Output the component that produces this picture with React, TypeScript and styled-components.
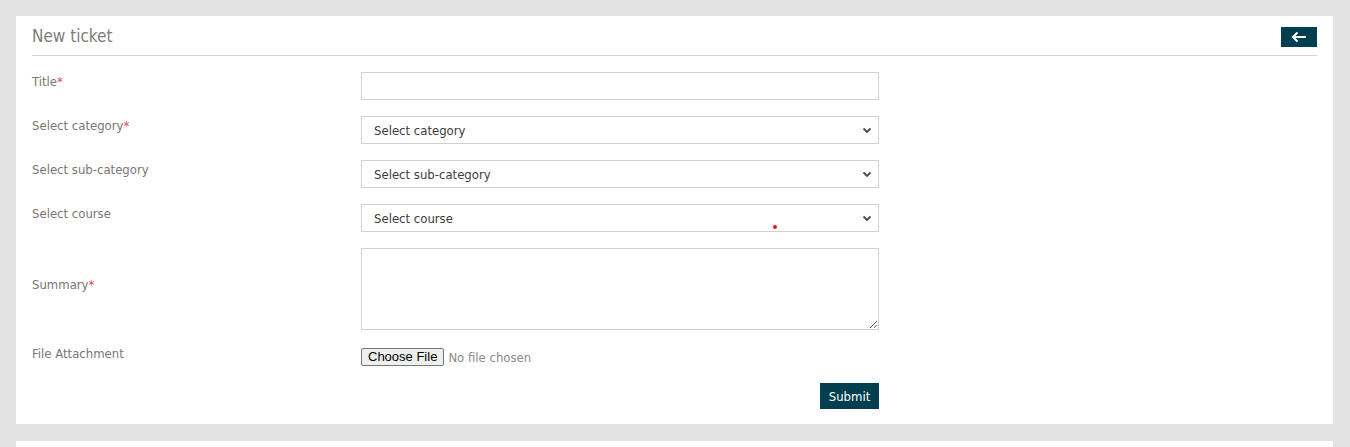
import React from 'react';
import styled, { createGlobalStyle } from 'styled-components';

const GlobalStyle = createGlobalStyle`
  html, body {
    margin: 0;
    padding: 0;
    background: #e3e3e3;
  }
  body {
    font-family: 'DejaVu Sans Condensed', 'DejaVu Sans', Tahoma, sans-serif;
    font-size: 13px;
  }
  * {
    box-sizing: border-box;
  }
`;

const Page = styled.div`
  padding: 16px 17px 0 16px;
  display: flex;
  flex-direction: column;
  gap: 17px;
`;

const Card = styled.section`
  background: #fff;
  padding: 11px 16px 15px 16px;
  position: relative;
`;

const EmptyCard = styled.section`
  background: #fff;
  height: 20px;
`;

const Header = styled.div`
  display: flex;
  align-items: flex-start;
  justify-content: space-between;
  border-bottom: 1px solid #d6d6d6;
  height: 29px;
`;

const Heading = styled.h2`
  margin: -1px 0 0;
  font-size: 17px;
  font-weight: normal;
  color: #7d7d7d;
  line-height: 20px;
`;

const BackButton = styled.button`
  width: 36px;
  height: 20px;
  border: none;
  background: #003e50;
  display: flex;
  align-items: center;
  justify-content: center;
  padding: 0;
  cursor: pointer;
`;

const Form = styled.form`
  display: flex;
  flex-direction: column;
  gap: 16px;
  padding-top: 16px;
`;

const Row = styled.div`
  display: grid;
  grid-template-columns: 329px 518px;
  align-items: center;
`;

const Label = styled.label<{ $tight?: boolean }>`
  color: #7b7474;
  font-size: 13px;
  line-height: 16px;
  margin-bottom: ${(p) => (p.$tight ? '5px' : '8px')};
`;

const Star = styled.span`
  color: #e2454f;
`;

const TextInput = styled.input`
  height: 28px;
  width: 100%;
  border: 1px solid #ccd0d5;
  padding: 0 12px;
  font: inherit;
  outline: none;
`;

const SelectWrap = styled.div`
  position: relative;
`;

const Select = styled.select`
  appearance: none;
  -webkit-appearance: none;
  height: 28px;
  width: 100%;
  border: 1px solid #ccd0d5;
  background: #fff;
  padding: 0 12px;
  font: inherit;
  font-size: 13px;
  color: #3c3c3c;
  outline: none;
`;

const Chevron = styled.svg`
  position: absolute;
  right: 7px;
  top: 11px;
  pointer-events: none;
`;

const TextArea = styled.textarea`
  height: 82px;
  width: 100%;
  border: 1px solid #ccd0d5;
  padding: 6px 12px;
  font: inherit;
  resize: vertical;
  outline: none;
  display: block;
`;

const FileInput = styled.input`
  display: block;
  font-family: 'DejaVu Sans Condensed', 'DejaVu Sans', Tahoma, sans-serif;
  font-size: 13px;
  line-height: 18px;
  color: #8a8a8a;
  height: 18px;

  &::file-selector-button {
    font-family: 'Liberation Sans', Arial, sans-serif;
    font-size: 13px;
    color: #000;
    background: #efefef;
    border: 1px solid #767676;
    border-radius: 2px;
    padding: 0 6px;
    height: 18px;
    margin-right: 4px;
  }
`;

const SubmitRow = styled.div`
  display: grid;
  grid-template-columns: 329px 518px;
`;

const SubmitButton = styled.button`
  grid-column: 2;
  justify-self: end;
  height: 26px;
  width: 59px;
  border: none;
  background: #003e50;
  color: #fff;
  font-family: 'DejaVu Sans Condensed', 'DejaVu Sans', Tahoma, sans-serif;
  font-size: 13px;
  padding: 0;
  cursor: pointer;
`;

const Dot = styled.span`
  position: absolute;
  left: 757px;
  top: 209px;
  width: 4px;
  height: 4px;
  border-radius: 50%;
  background: #e8141e;
`;

const ChevronIcon = () => (
  <Chevron width="10" height="7" viewBox="0 0 10 7">
    <path d="M1.5 1.5 L5 5 L8.5 1.5" fill="none" stroke="#4a4a4a" strokeWidth="1.8" />
  </Chevron>
);

const selects = [
  { label: 'Select category', required: true },
  { label: 'Select sub-category', required: false },
  { label: 'Select course', required: false },
];

export default function App() {
  return (
    <>
      <GlobalStyle />
      <Page>
        <Card>
          <Header>
            <Heading>New ticket</Heading>
            <BackButton type="button" aria-label="Back">
              <svg width="16" height="12" viewBox="0 0 16 12">
                <path d="M15 6 H2 M6.5 1.5 L2 6 L6.5 10.5" fill="none" stroke="#fff" strokeWidth="2" />
              </svg>
            </BackButton>
          </Header>
          <Form onSubmit={(e) => e.preventDefault()}>
            <Row>
              <Label>
                Title<Star>*</Star>
              </Label>
              <TextInput type="text" />
            </Row>
            {selects.map((s) => (
              <Row key={s.label}>
                <Label>
                  {s.label}
                  {s.required && <Star>*</Star>}
                </Label>
                <SelectWrap>
                  <Select defaultValue="">
                    <option value="">{s.label}</option>
                  </Select>
                  <ChevronIcon />
                </SelectWrap>
              </Row>
            ))}
            <Row>
              <Label>
                Summary<Star>*</Star>
              </Label>
              <TextArea />
            </Row>
            <Row>
              <Label $tight>File Attachment</Label>
              <FileInput type="file" />
            </Row>
            <SubmitRow>
              <SubmitButton type="submit">Submit</SubmitButton>
            </SubmitRow>
          </Form>
          <Dot />
        </Card>
        <EmptyCard />
      </Page>
    </>
  );
}
